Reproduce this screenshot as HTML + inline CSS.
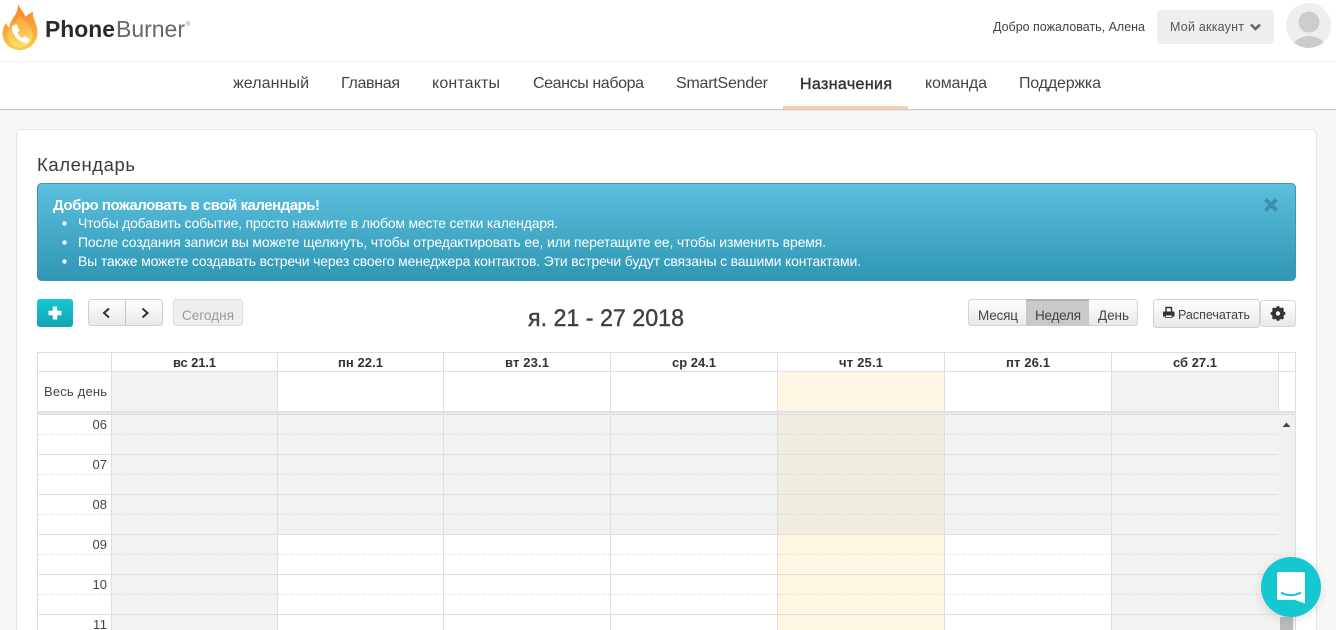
<!DOCTYPE html>
<html lang="ru"><head><meta charset="utf-8"><title>Календарь</title>
<style>
html,body{margin:0;padding:0;width:1336px;height:630px;overflow:hidden;background:#f8f8f8}
svg{display:block;font-family:"Liberation Sans","DejaVu Sans",sans-serif}
.r{shape-rendering:crispEdges}
.nav{font-size:16px;fill:#444}
.th{font-size:13px;font-weight:bold;fill:#333}
.hr{font-size:13px;fill:#444;text-anchor:end}
.al{font-size:14px;fill:#fff}
.b{font-size:13.5px;fill:#444}
</style></head><body>
<svg xmlns="http://www.w3.org/2000/svg" width="1336" height="630" viewBox="0 0 1336 630">
<defs>
<linearGradient id="ga" x1="0" y1="0" x2="0" y2="1"><stop offset="0" stop-color="#5bc0de"/><stop offset="1" stop-color="#2f96b4"/></linearGradient>
<linearGradient id="gp" x1="0" y1="0" x2="0" y2="1"><stop offset="0" stop-color="#17c8d2"/><stop offset="1" stop-color="#10a5b0"/></linearGradient>
<linearGradient id="gb" x1="0" y1="0" x2="0" y2="1"><stop offset="0" stop-color="#ffffff"/><stop offset="1" stop-color="#e8e8e8"/></linearGradient>
<linearGradient id="gf" x1="0" y1="0" x2="0" y2="1"><stop offset="0" stop-color="#f9822b"/><stop offset=".6" stop-color="#fba93a"/><stop offset="1" stop-color="#fdc94d"/></linearGradient>
<linearGradient id="gi" x1="0" y1="0" x2="0" y2="1"><stop offset="0" stop-color="#fba53a"/><stop offset="1" stop-color="#fde068"/></linearGradient>
<filter id="sh" x="-30%" y="-30%" width="160%" height="160%"><feGaussianBlur stdDeviation="5"/></filter>
<clipPath id="av"><circle cx="1308.5" cy="25.5" r="22.5"/></clipPath>
</defs>

<!-- header -->
<rect class="r" x="0" y="0" width="1336" height="109" fill="#fff"/>
<rect class="r" x="0" y="61" width="1336" height="1" fill="#eee"/>
<rect class="r" x="0" y="109" width="1336" height="1" fill="#c9c9c9"/>
<rect class="r" x="0" y="110" width="1336" height="1" fill="#eaeaea"/>

<!-- logo -->
<path d="M18 4C20 9 24 12 25.5 17C27 15 30 13 33 12C32 18 37.5 24 37.5 32C37.5 43 29 50 20 50C10 50 2.5 43 2.5 33C2.5 29 4.5 25 6 23C7 25 8 27 9.5 28C9 20 19 14 18 4Z" fill="url(#gf)"/>
<path d="M20 16C24 21 33 26 33 35C33 43 26 47.5 20 47.5C13 47.5 7.5 42 7.5 35C7.5 27 16 24 20 16Z" fill="url(#gi)"/>
<path d="M12 26L16.5 24L19.5 30.5L17.5 32.5C18.5 35 20.5 37 22.5 38L24.5 36L30 39.5L28 43C20 44 11.5 35 12 26Z" fill="#fff"/>
<text x="45" y="37" font-size="23.5" font-weight="bold" fill="#2b2b2b" textLength="70" lengthAdjust="spacingAndGlyphs">Phone</text>
<text x="116" y="37" font-size="23.5" fill="#666" textLength="69" lengthAdjust="spacingAndGlyphs">Burner</text>
<text x="186" y="26" font-size="6" fill="#888">®</text>

<!-- top right -->
<text x="993" y="31" font-size="12.5" fill="#444" textLength="152">Добро пожаловать, Алена</text>
<rect x="1157" y="10" width="117" height="34" rx="4" fill="#eee"/>
<text x="1170" y="31" font-size="12.5" fill="#555" textLength="74">Мой аккаунт</text>
<path d="M1251 24.5L1255.5 29L1260 24.5" fill="none" stroke="#666" stroke-width="2.6"/>
<circle cx="1308.5" cy="25.5" r="22.5" fill="#eee"/>
<g clip-path="url(#av)"><circle cx="1309" cy="22" r="10.5" fill="#ccc"/><ellipse cx="1309" cy="49" rx="17" ry="13" fill="#ccc"/></g>

<!-- nav -->
<text class="nav" x="233" y="88" textLength="76">желанный</text>
<text class="nav" x="341" y="88" textLength="59">Главная</text>
<text class="nav" x="432" y="88" textLength="68">контакты</text>
<text class="nav" x="533" y="88" textLength="111">Сеансы набора</text>
<text class="nav" x="676" y="88" textLength="92">SmartSender</text>
<text x="800" y="89" font-size="16" fill="#333" stroke="#333" stroke-width=".4" textLength="92">Назначения</text>
<text class="nav" x="925" y="88" textLength="62">команда</text>
<text class="nav" x="1019" y="88" textLength="82">Поддержка</text>
<rect class="r" x="783" y="106" width="125" height="3" fill="#f5d0ab"/>

<!-- card -->
<rect x="16.5" y="129.5" width="1300" height="520" rx="4" fill="#fff" stroke="#e4e4e4"/>
<text x="37" y="171" font-size="18.5" fill="#3a3a3a" textLength="98">Календарь</text>

<!-- alert -->
<rect x="37.5" y="183.5" width="1258" height="97" rx="4" fill="url(#ga)" stroke="#3f95b0"/>
<text x="53" y="210" font-size="15" font-weight="bold" fill="#fff" textLength="267">Добро пожаловать в свой календарь!</text>
<circle cx="64.5" cy="223.5" r="2.2" fill="#fff"/><circle cx="64.5" cy="242.5" r="2.2" fill="#fff"/><circle cx="64.5" cy="261.5" r="2.2" fill="#fff"/>
<text class="al" x="78" y="228" textLength="480">Чтобы добавить событие, просто нажмите в любом месте сетки календаря.</text>
<text class="al" x="78" y="247" textLength="748">После создания записи вы можете щелкнуть, чтобы отредактировать ее, или перетащите ее, чтобы изменить время.</text>
<text class="al" x="78" y="266" textLength="783">Вы также можете создавать встречи через своего менеджера контактов. Эти встречи будут связаны с вашими контактами.</text>
<path d="M1265.5 199.5L1276.5 210.5M1276.5 199.5L1265.5 210.5" stroke="#3f8eac" stroke-width="4" fill="none"/>

<!-- toolbar left -->
<rect x="37" y="299" width="36" height="28" rx="3" fill="url(#gp)"/>
<path d="M55 306.5V319.5M48.5 313H61.5" stroke="#fff" stroke-width="4.4" fill="none"/>
<rect x="88.5" y="299.5" width="74" height="26" rx="3" fill="url(#gb)" stroke="#d0d0d0"/>
<rect class="r" x="125" y="300" width="1" height="25" fill="#c4c4c4"/>
<path d="M109 308.5L104 313L109 317.5M142.5 308.5L147.5 313L142.5 317.5" fill="none" stroke="#333" stroke-width="2"/>
<rect x="173.5" y="299.5" width="69" height="26" rx="3" fill="#eee" stroke="#ddd"/>
<text x="182" y="320" font-size="13.5" fill="#999" textLength="52">Сегодня</text>

<text x="528" y="326" font-size="24" fill="#404040" stroke="#404040" stroke-width=".4" textLength="156" lengthAdjust="spacingAndGlyphs" style="word-spacing:0">я. 21 - 27 2018</text>

<!-- view switch -->
<rect x="968.5" y="299.5" width="169" height="26" rx="3" fill="url(#gb)" stroke="#d4d4d4"/>
<rect class="r" x="1026" y="299" width="63" height="27" fill="#c9c9c9"/>
<rect class="r" x="1026" y="299" width="63" height="2" fill="#b4b4b4"/>
<text class="b" x="978" y="320" textLength="40">Месяц</text>
<text class="b" x="1035" y="320" textLength="46">Неделя</text>
<text class="b" x="1098" y="320" textLength="31">День</text>

<!-- print + gear -->
<rect x="1260.5" y="300.5" width="35" height="26" rx="3" fill="url(#gb)" stroke="#d8d8d8"/>
<rect x="1153.5" y="299.5" width="106" height="28" rx="3" fill="url(#gb)" stroke="#d0d0d0"/>
<path d="M1166 312V307.5H1171.5V312" fill="none" stroke="#333" stroke-width="1.4"/>
<path d="M1164 311.5H1173.5A.8 .8 0 0 1 1174.5 312.5V316.5H1163V312.5A.8 .8 0 0 1 1164 311.5Z" fill="#333"/>
<rect x="1165.5" y="315" width="6.5" height="2.5" fill="#fff" stroke="#333" stroke-width=".8"/>
<text x="1178" y="319" font-size="12.5" fill="#444" textLength="72">Распечатать</text>
<circle cx="1278" cy="313.5" r="4.6" fill="none" stroke="#333" stroke-width="3.2"/>
<path d="M1278 306.2V320.8M1270.7 313.5H1285.3M1272.8 308.3L1283.2 318.7M1283.2 308.3L1272.8 318.7" stroke="#333" stroke-width="2.8" fill="none"/>
<circle cx="1278" cy="313.5" r="2.2" fill="#f4f4f4"/>

<!-- grid fills -->
<g class="r">
<rect x="38" y="353" width="1257" height="277" fill="#fff"/>
<rect x="112" y="372" width="165" height="39" fill="#f2f2f2"/>
<rect x="1112" y="372" width="166" height="39" fill="#f2f2f2"/>
<rect x="778" y="372" width="166" height="39" fill="#fdf6e2"/>
<rect x="38" y="411" width="1257" height="4" fill="#e8e8e8"/>
<rect x="112" y="415" width="1166" height="120" fill="#f2f2f2"/>
<rect x="778" y="415" width="166" height="120" fill="#f0ecdf"/>
<rect x="112" y="535" width="165" height="95" fill="#f2f2f2"/>
<rect x="1112" y="535" width="166" height="95" fill="#f2f2f2"/>
<rect x="778" y="535" width="166" height="95" fill="#fdf6e2"/>
<rect x="1278" y="415" width="17" height="215" fill="#f1f1f1"/>
<rect x="1280" y="617" width="13" height="13" fill="#bababa"/>

<!-- horizontal -->
<g fill="#dedede">
<rect x="37" y="352" width="1259" height="1"/>
<rect x="37" y="371" width="1259" height="1"/>
<rect x="37" y="411" width="1259" height="1"/>
<rect x="37" y="414" width="1259" height="1"/>
<rect x="37" y="454" width="1241" height="1"/>
<rect x="37" y="494" width="1241" height="1"/>
<rect x="37" y="534" width="1241" height="1"/>
<rect x="37" y="574" width="1241" height="1"/>
<rect x="37" y="614" width="1241" height="1"/>
</g>
<!-- vertical -->
<g fill="#dedede">
<rect x="37" y="352" width="1" height="278"/>
<rect x="111" y="352" width="1" height="278"/>
<rect x="277" y="352" width="1" height="278"/>
<rect x="443" y="352" width="1" height="278"/>
<rect x="610" y="352" width="1" height="278"/>
<rect x="777" y="352" width="1" height="278"/>
<rect x="944" y="352" width="1" height="278"/>
<rect x="1111" y="352" width="1" height="278"/>
<rect x="1278" y="352" width="1" height="60"/>
<rect x="1295" y="352" width="1" height="278"/>
</g>
</g>
<!-- dotted half-hours -->
<g stroke="#d0d0d0" stroke-width="1" stroke-dasharray="1 2" fill="none" class="r">
<path d="M38 434.5H1278M38 474.5H1278M38 514.5H1278M38 554.5H1278M38 594.5H1278"/>
</g>

<text class="th" x="173" y="367" textLength="43">вс 21.1</text>
<text class="th" x="338" y="367" textLength="45">пн 22.1</text>
<text class="th" x="505" y="367" textLength="44">вт 23.1</text>
<text class="th" x="672" y="367" textLength="44">ср 24.1</text>
<text class="th" x="839" y="367" textLength="44">чт 25.1</text>
<text class="th" x="1006" y="367" textLength="44">пт 26.1</text>
<text class="th" x="1173" y="367" textLength="44">сб 27.1</text>
<text x="44" y="396" font-size="13" fill="#444" textLength="63">Весь день</text>
<text class="hr" x="107" y="429">06</text>
<text class="hr" x="107" y="469">07</text>
<text class="hr" x="107" y="509">08</text>
<text class="hr" x="107" y="549">09</text>
<text class="hr" x="107" y="589">10</text>
<text class="hr" x="107" y="629" textLength="14">11</text>
<path d="M1282.5 427L1286.5 422.5L1290.5 427Z" fill="#444"/>

<!-- chat bubble -->
<circle cx="1291" cy="589" r="30" fill="#000" opacity=".12" filter="url(#sh)"/>
<circle cx="1291" cy="587" r="30" fill="#15c7d1"/>
<path d="M1279 572H1303A2 2 0 0 1 1305 574V603.5L1295 600H1279A2 2 0 0 1 1277 598V574A2 2 0 0 1 1279 572Z" fill="#fff"/>
<path d="M1281 592.5C1287 596 1295 596 1301 592.5" fill="none" stroke="#15c7d1" stroke-width="1.9"/>
</svg>
</body></html>
